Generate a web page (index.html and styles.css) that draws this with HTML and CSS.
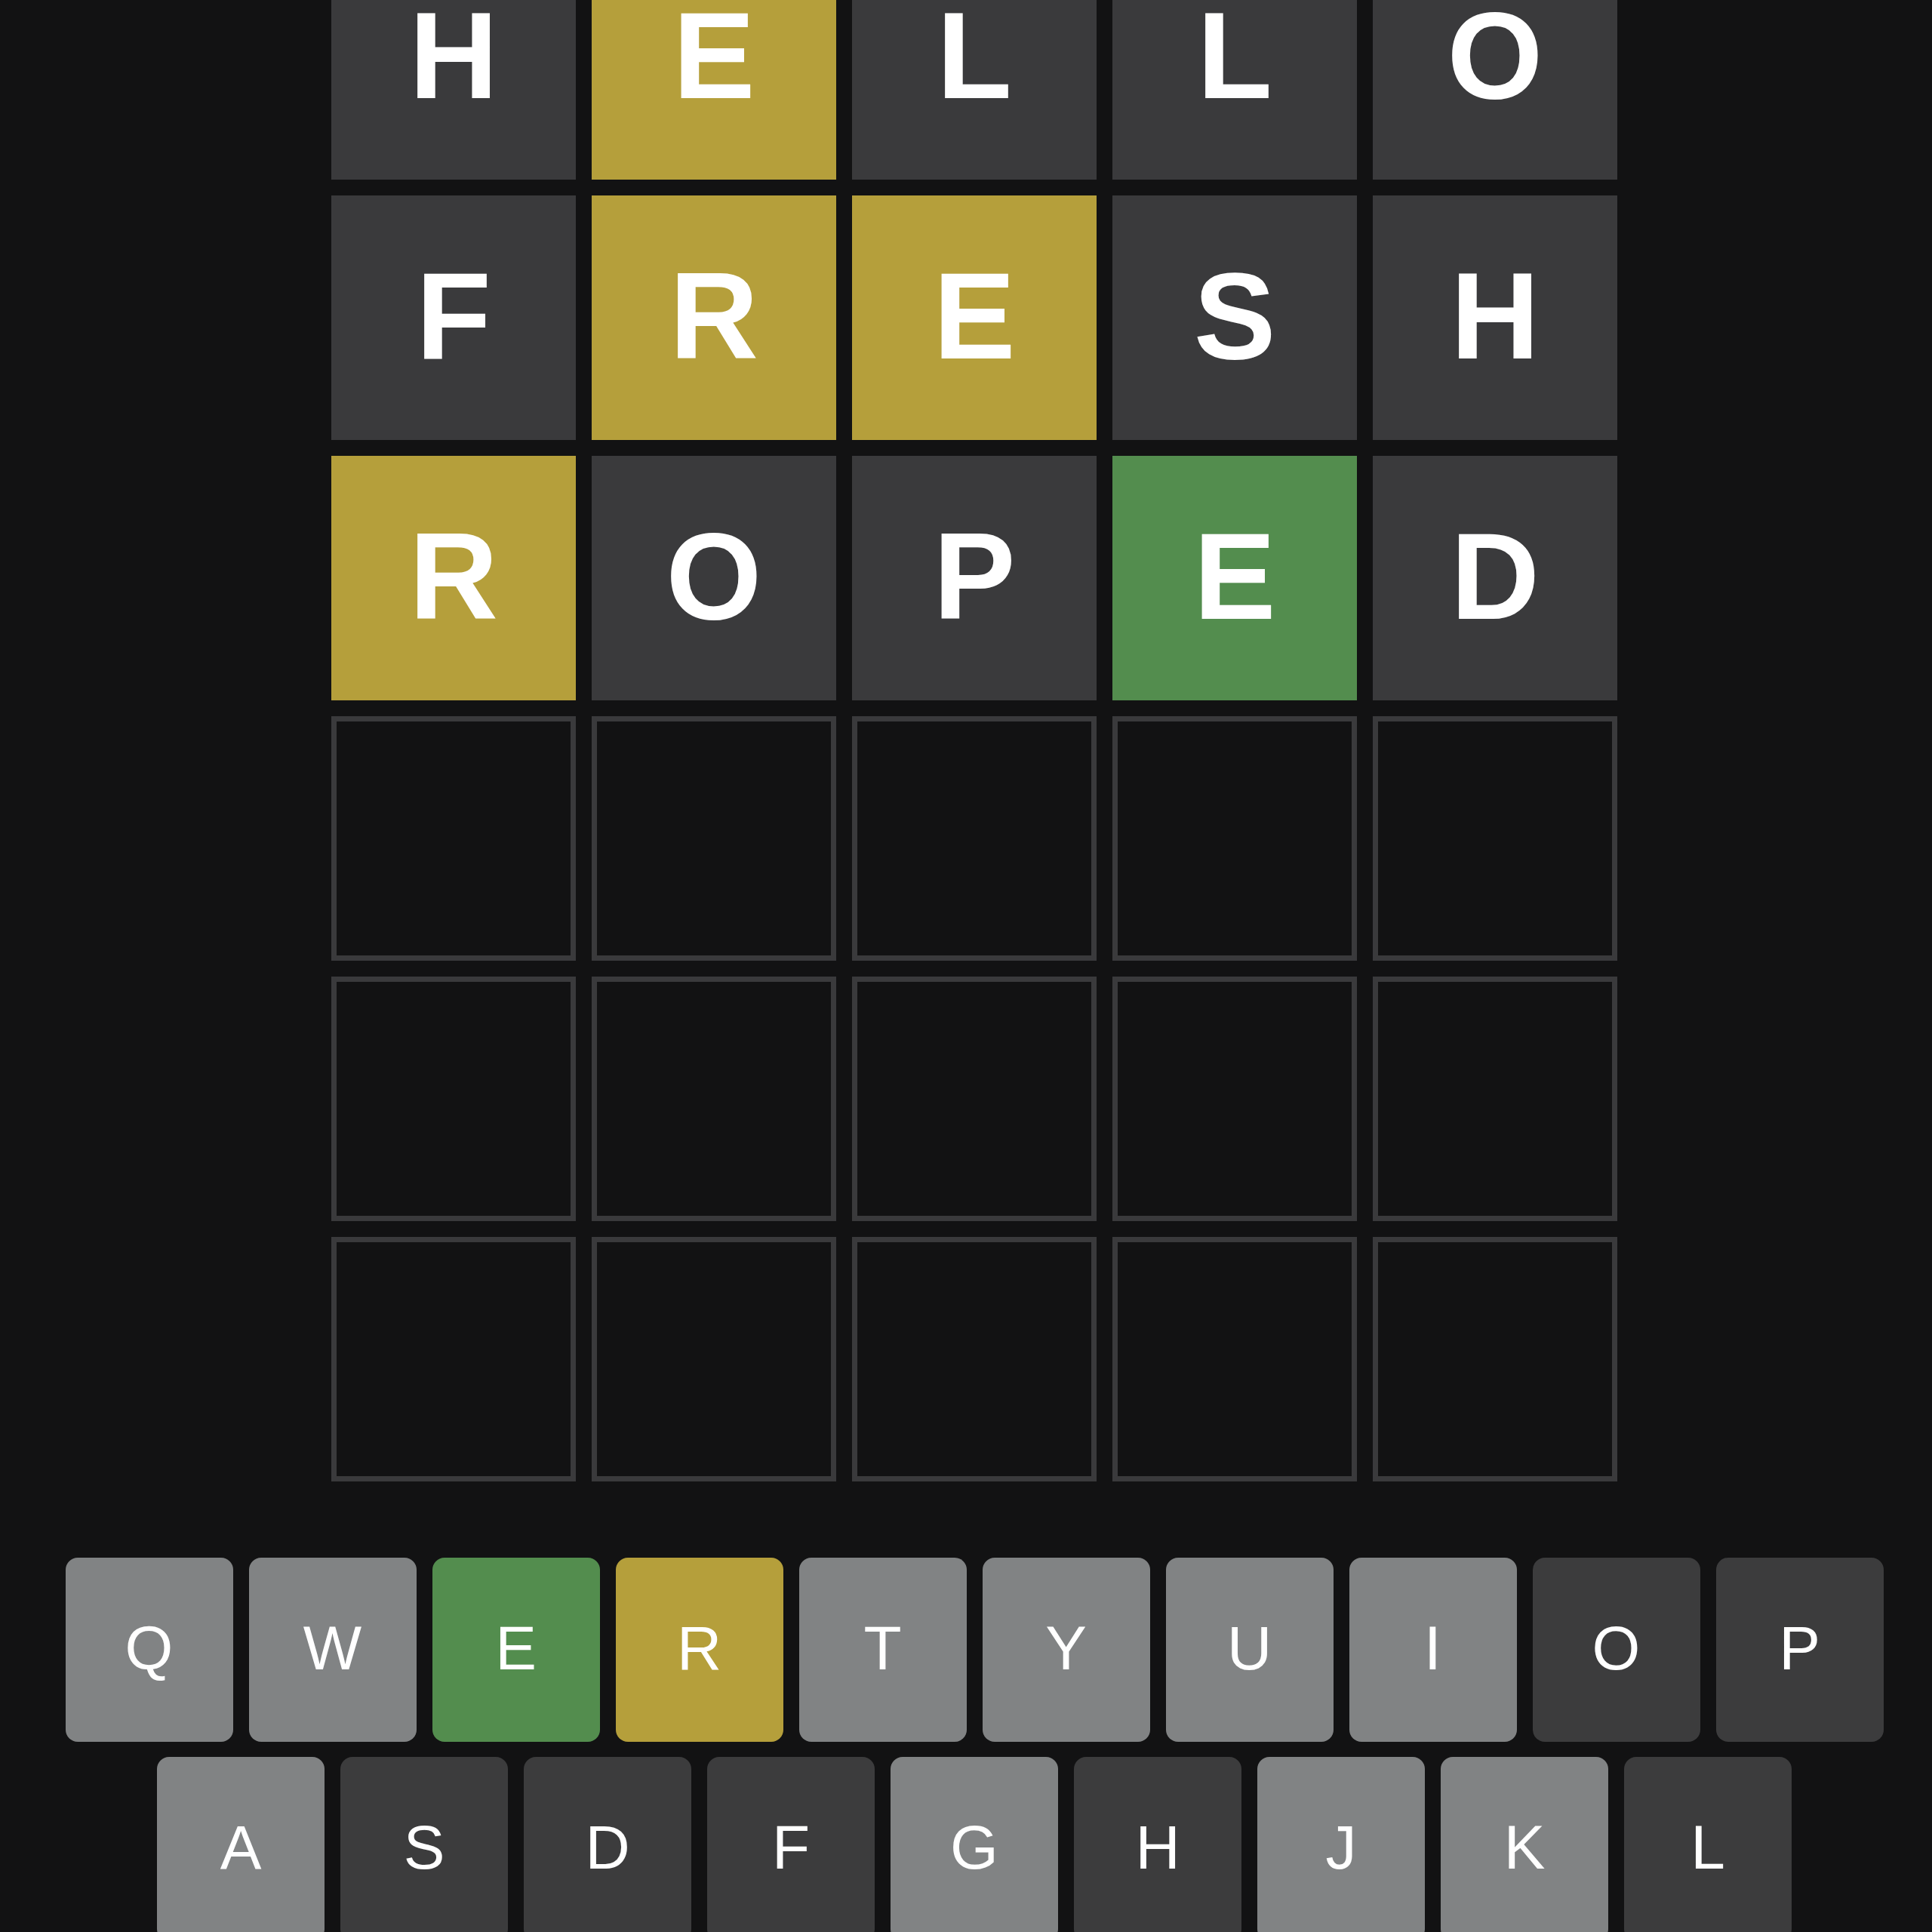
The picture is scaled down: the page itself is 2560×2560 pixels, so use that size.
FILE: index.html
```html
<!DOCTYPE html>
<html lang="en">
<head>
<meta charset="utf-8">
<title>Wordle</title>
<link rel="stylesheet" href="styles.css">
</head>
<body>
<main class="app">
  <section class="board">
    <div class="row">
      <div class="tile absent">H</div>
      <div class="tile present">E</div>
      <div class="tile absent">L</div>
      <div class="tile absent">L</div>
      <div class="tile absent">O</div>
    </div>
    <div class="row">
      <div class="tile absent">F</div>
      <div class="tile present">R</div>
      <div class="tile present">E</div>
      <div class="tile absent">S</div>
      <div class="tile absent">H</div>
    </div>
    <div class="row">
      <div class="tile present">R</div>
      <div class="tile absent">O</div>
      <div class="tile absent">P</div>
      <div class="tile correct">E</div>
      <div class="tile absent">D</div>
    </div>
    <div class="row">
      <div class="tile empty"></div>
      <div class="tile empty"></div>
      <div class="tile empty"></div>
      <div class="tile empty"></div>
      <div class="tile empty"></div>
    </div>
    <div class="row">
      <div class="tile empty"></div>
      <div class="tile empty"></div>
      <div class="tile empty"></div>
      <div class="tile empty"></div>
      <div class="tile empty"></div>
    </div>
    <div class="row">
      <div class="tile empty"></div>
      <div class="tile empty"></div>
      <div class="tile empty"></div>
      <div class="tile empty"></div>
      <div class="tile empty"></div>
    </div>
  </section>
  <section class="keyboard">
    <div class="key-row">
      <button class="key unused">Q</button>
      <button class="key unused">W</button>
      <button class="key correct">E</button>
      <button class="key present">R</button>
      <button class="key unused">T</button>
      <button class="key unused">Y</button>
      <button class="key unused">U</button>
      <button class="key unused">I</button>
      <button class="key absent">O</button>
      <button class="key absent">P</button>
    </div>
    <div class="key-row">
      <button class="key unused">A</button>
      <button class="key absent">S</button>
      <button class="key absent">D</button>
      <button class="key absent">F</button>
      <button class="key unused">G</button>
      <button class="key absent">H</button>
      <button class="key unused">J</button>
      <button class="key unused">K</button>
      <button class="key absent">L</button>
    </div>
  </section>
</main>
</body>
</html>
```

FILE: styles.css
```css
html, body {
  margin: 0;
  padding: 0;
  background: #121213;
  overflow: hidden;
}

body {
  width: 2560px;
  height: 2560px;
  font-family: "Liberation Sans", Arial, Helvetica, sans-serif;
  color: #ffffff;
}

.app {
  box-sizing: border-box;
  width: 2560px;
  padding-left: 22px;
  display: flex;
  flex-direction: column;
  align-items: center;
}

.board {
  margin-top: -86px;
  display: flex;
  flex-direction: column;
  gap: 21px;
}

.row {
  display: grid;
  grid-template-columns: repeat(5, 324px);
  gap: 21px;
}

.tile {
  box-sizing: border-box;
  width: 324px;
  height: 324px;
  display: flex;
  align-items: center;
  justify-content: center;
  font-size: 163px;
  font-weight: 700;
  line-height: 1;
  color: #ffffff;
  padding-bottom: 5px;
}

.tile.absent { background: #3a3a3c; }
.tile.present { background: #b59f3b; }
.tile.correct { background: #538d4e; }
.tile.empty {
  background: #121213;
  border: 7px solid #3a3a3c;
}

.keyboard {
  margin-top: 101px;
  display: flex;
  flex-direction: column;
  align-items: center;
  gap: 20px;
}

.key-row {
  display: flex;
  gap: 21px;
}

.key {
  width: 222px;
  height: 244px;
  border: 0;
  border-radius: 16px;
  padding: 0 0 4px 0;
  margin: 0;
  font-family: "Liberation Sans", Arial, Helvetica, sans-serif;
  font-size: 82px;
  font-weight: 400;
  color: #ffffff;
  display: flex;
  align-items: center;
  justify-content: center;
}

.key.unused { background: #818384; }
.key.absent { background: #3c3c3d; }
.key.present { background: #b59f3b; }
.key.correct { background: #538d4e; }
```
